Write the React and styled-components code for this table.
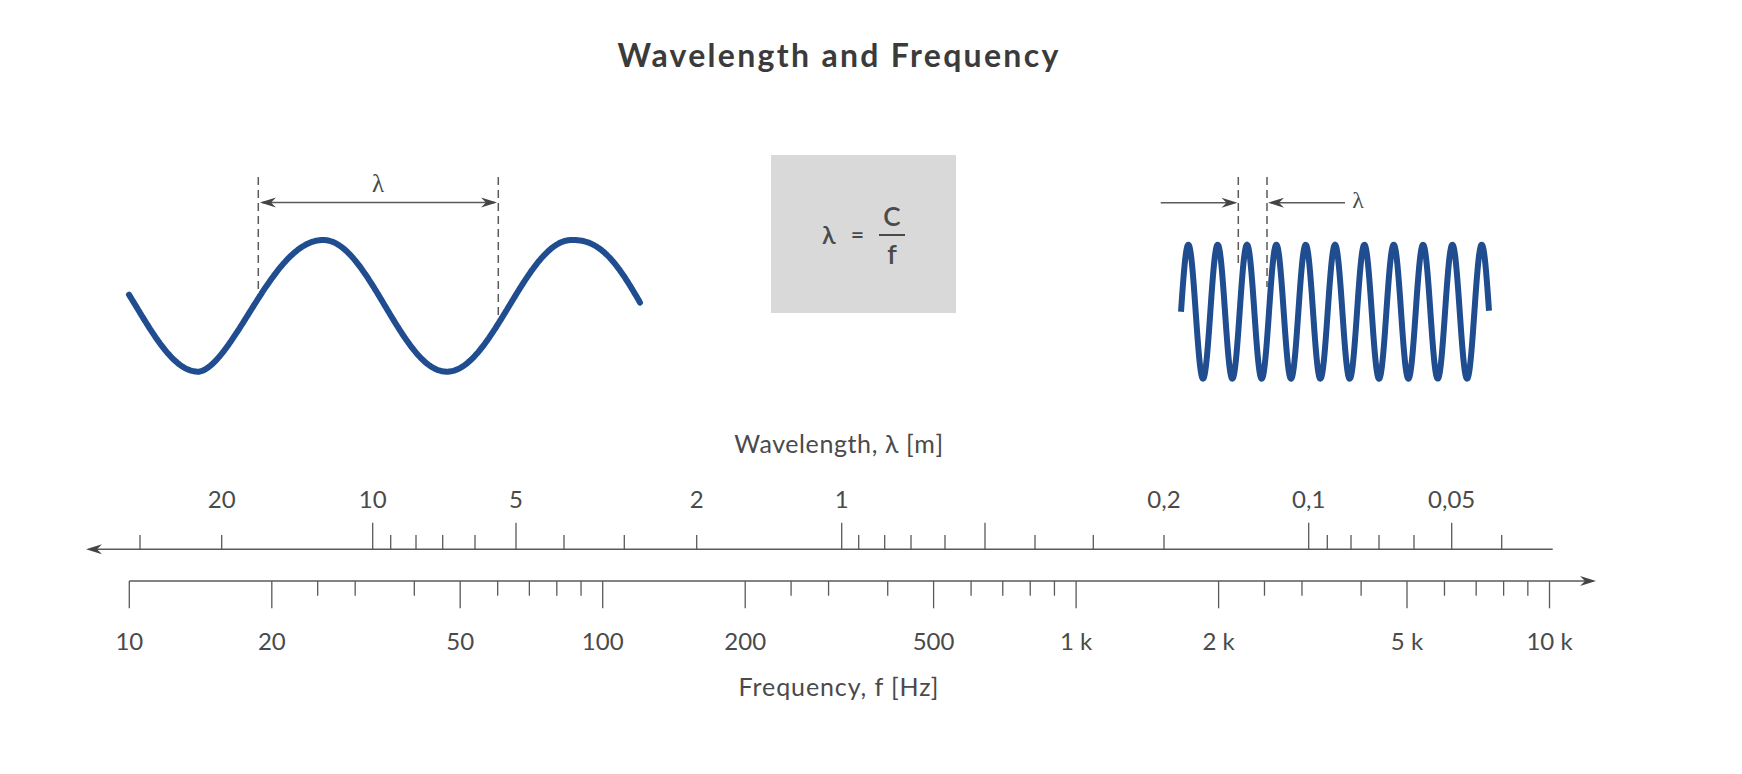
import React from 'react'
import styled, { createGlobalStyle } from 'styled-components'

const GlobalStyle = createGlobalStyle`
  html, body {
    margin: 0;
    padding: 0;
    background: #ffffff;
  }
  body {
    font-family: "Lato", "Noto Sans", "DejaVu Sans", sans-serif;
    color: #444444;
  }
`

const WAVE_BLUE = '#1f4d8f'
const INK = '#4a4a4a'
const LINE = '#5a5a5a'

// long wave: extremes measured off the figure, one warp per half wave
const slowWave = {
  mid: 305.85,
  amp: 65.85,
  extremes: [73.3, 198.3, 323.3, 446.7, 571.7, 696.7],
  warps: [1, 0.85, 1, 1, 1.2],
  firstIsPeak: true,
}

function slowWavePath(from, to) {
  const { mid, amp, extremes, warps, firstIsPeak } = slowWave
  const pts = []
  for (let x = from; x <= to; x += 1) {
    let i = 0
    while (i < extremes.length - 2 && x > extremes[i + 1]) i++
    const a = extremes[i]
    const b = extremes[i + 1]
    const t = Math.pow(Math.min(Math.max((x - a) / (b - a), 0), 1), warps[i])
    const startsAtPeak = firstIsPeak ? i % 2 === 0 : i % 2 === 1
    const y = startsAtPeak
      ? mid - amp * Math.cos(Math.PI * t)
      : mid + amp * Math.cos(Math.PI * t)
    pts.push(`${x.toFixed(1)},${y.toFixed(1)}`)
  }
  return 'M' + pts.join(' L')
}

function fastWavePath(from, to, mid, amp, period) {
  const pts = []
  for (let x = from; x <= to + 0.01; x += 0.5) {
    const y = mid - amp * Math.sin((2 * Math.PI * (x - from)) / period)
    pts.push(`${x.toFixed(2)},${y.toFixed(2)}`)
  }
  return 'M' + pts.join(' L')
}

// arrow head, tip at (x, y), dir = 1 points right, -1 points left
function headPath(x, y, dir) {
  const b = x - dir * 16
  const n = x - dir * 11
  return `M${x},${y} L${b},${y - 5} L${n},${y} L${b},${y + 5} Z`
}

const wavelengthTicks = [
  { x: 140 }, { x: 221.7, label: '20' }, { x: 372.7, long: true, label: '10' },
  { x: 390.7 }, { x: 416 }, { x: 442.7 }, { x: 475 },
  { x: 516, long: true, label: '5' }, { x: 564 }, { x: 624.3 },
  { x: 696.7, label: '2' }, { x: 841.7, long: true, label: '1' },
  { x: 858.7 }, { x: 884.7 }, { x: 911 }, { x: 945 }, { x: 985, long: true },
  { x: 1035 }, { x: 1093.3 }, { x: 1164, label: '0,2' },
  { x: 1308.7, long: true, label: '0,1' }, { x: 1327.3 }, { x: 1351 },
  { x: 1379 }, { x: 1414 }, { x: 1451.7, long: true, label: '0,05' },
  { x: 1501.7 },
]

const FREQ_ORIGIN = 129.3
const DECADE = 473.4
const freqX = (f) => FREQ_ORIGIN + Math.log10(f / 10) * DECADE

const frequencyTicks = [
  [10, '10'], [20, '20'], [25], [30], [40], [50, '50'], [60], [70], [80], [90],
  [100, '100'], [200, '200'], [250], [300], [400], [500, '500'], [600], [700],
  [800], [900], [1000, '1 k'], [2000, '2 k'], [2500], [3000], [4000],
  [5000, '5 k'], [6000], [7000], [8000], [9000], [10000, '10 k'],
].map(([f, label]) => ({
  x: freqX(f),
  label,
  long: /^[125]0*$/.test(String(f)),
}))

const Page = styled.div`
  width: 1742px;
  height: 774px;
  overflow: hidden;
`

const Figure = styled.div`
  width: 1678px;
  display: flex;
  flex-direction: column;
`

const Title = styled.h1`
  margin: 35px 0 0;
  height: 40px;
  line-height: 40px;
  font-size: 32px;
  font-weight: 700;
  letter-spacing: 2.3px;
  text-align: center;
  color: #3b3b3b;
`

const WaveRow = styled.div`
  display: flex;
  align-items: flex-start;
  margin-top: 75px;
  padding-left: 100px;
  height: 250px;
`

const WavePanel = styled.svg`
  display: block;
  flex: none;
  margin-left: ${(p) => p.$offset || 0}px;
`

const FormulaCard = styled.div`
  flex: none;
  margin: 5px 0 0 111px;
  width: 185px;
  height: 158px;
  background: #d9d9d9;
  display: flex;
  align-items: center;
  justify-content: center;
  gap: 15px;
  color: ${INK};
  font-weight: 600;
`

const Symbol = styled.span`
  font-size: ${(p) => p.$size || 21}px;
  line-height: 26px;
`

const Fraction = styled.span`
  display: inline-flex;
  flex-direction: column;
  align-items: center;
  width: 26px;
  padding-top: 2px;
`

const FractionBar = styled.span`
  display: block;
  width: 26px;
  height: 2px;
  margin: 5px 0;
  background: ${INK};
`

const AxisTitle = styled.div`
  margin-top: ${(p) => p.$gap}px;
  height: 30px;
  line-height: 30px;
  font-size: 25px;
  font-weight: 400;
  letter-spacing: ${(p) => p.$spacing}px;
  text-align: center;
  color: ${INK};
`

const ScaleChart = styled.svg`
  display: block;
  width: 1678px;
  height: 205px;
`

function SlowWave() {
  return (
    <WavePanel width="560" height="250" viewBox="100 150 560 250">
      <g stroke={LINE} strokeWidth="1.5" strokeDasharray="8 5">
        <line x1="258.3" y1="177" x2="258.3" y2="297" />
        <line x1="498.3" y1="177" x2="498.3" y2="325" />
      </g>
      <line x1="262" y1="202.5" x2="495" y2="202.5" stroke={LINE} strokeWidth="1.5" />
      <path d={headPath(260, 202.5, -1)} fill="#444" />
      <path d={headPath(497, 202.5, 1)} fill="#444" />
      <text
        x="378"
        y="192"
        textAnchor="middle"
        fontFamily='"Liberation Serif", "DejaVu Serif", serif'
        fontSize="25"
        fill={INK}
      >
        λ
      </text>
      <path
        d={slowWavePath(129, 640)}
        fill="none"
        stroke={WAVE_BLUE}
        strokeWidth="6"
        strokeLinecap="round"
        strokeLinejoin="round"
      />
    </WavePanel>
  )
}

function FastWave() {
  return (
    <WavePanel $offset={194} width="360" height="250" viewBox="1150 150 360 250">
      <g stroke={LINE} strokeWidth="1.5" strokeDasharray="8 5">
        <line x1="1238.3" y1="177" x2="1238.3" y2="266" />
        <line x1="1267" y1="177" x2="1267" y2="287" />
      </g>
      <line x1="1160.7" y1="202.7" x2="1234" y2="202.7" stroke={LINE} strokeWidth="1.5" />
      <path d={headPath(1237.5, 202.7, 1)} fill="#444" />
      <line x1="1271" y1="202.7" x2="1345" y2="202.7" stroke={LINE} strokeWidth="1.5" />
      <path d={headPath(1268, 202.7, -1)} fill="#444" />
      <text
        x="1358"
        y="208"
        textAnchor="middle"
        fontFamily='"Liberation Serif", "DejaVu Serif", serif'
        fontSize="24"
        fill={INK}
      >
        λ
      </text>
      <path
        d={fastWavePath(1181, 1489, 311.7, 67, 29.34)}
        fill="none"
        stroke={WAVE_BLUE}
        strokeWidth="6"
        strokeLinejoin="round"
      />
    </WavePanel>
  )
}

function Scale() {
  const lamY = 549.3
  const freqY = 581
  return (
    <ScaleChart viewBox="0 458 1678 205">
      <g stroke={LINE} strokeWidth="1.5" fill="none">
        <line x1="95" y1={lamY} x2="1552.7" y2={lamY} />
        <line x1="129.3" y1={freqY} x2="1588" y2={freqY} />
      </g>
      <path d={headPath(86, lamY, -1)} fill="#444" />
      <path d={headPath(1596, freqY, 1)} fill="#444" />
      <g stroke={LINE} strokeWidth="1.3">
        {wavelengthTicks.map((t) => (
          <line key={t.x} x1={t.x} y1={lamY} x2={t.x} y2={t.long ? 522.7 : 535} />
        ))}
        {frequencyTicks.map((t) => (
          <line key={t.x} x1={t.x} y1={freqY} x2={t.x} y2={t.long ? 608.3 : 595.7} />
        ))}
      </g>
      <g
        fontFamily='"Lato", "Noto Sans", sans-serif'
        fontSize="24"
        fill={INK}
        textAnchor="middle"
      >
        {wavelengthTicks
          .filter((t) => t.label)
          .map((t) => (
            <text key={t.label} x={t.x} y="508.3">
              {t.label}
            </text>
          ))}
        {frequencyTicks
          .filter((t) => t.label)
          .map((t) => (
            <text key={t.label} x={t.x} y="650">
              {t.label}
            </text>
          ))}
      </g>
    </ScaleChart>
  )
}

export default function App() {
  return (
    <Page>
      <GlobalStyle />
      <Figure>
        <Title>Wavelength and Frequency</Title>
        <WaveRow>
          <SlowWave />
          <FormulaCard>
            <Symbol $size={25}>λ</Symbol>
            <Symbol $size={23}>=</Symbol>
            <Fraction>
              <Symbol $size={26}>C</Symbol>
              <FractionBar />
              <Symbol $size={27}>f</Symbol>
            </Fraction>
          </FormulaCard>
          <FastWave />
        </WaveRow>
        <AxisTitle $gap={28} $spacing={0.6}>Wavelength, λ [m]</AxisTitle>
        <Scale />
        <AxisTitle $gap={8} $spacing={0.9}>Frequency, f [Hz]</AxisTitle>
      </Figure>
    </Page>
  )
}
